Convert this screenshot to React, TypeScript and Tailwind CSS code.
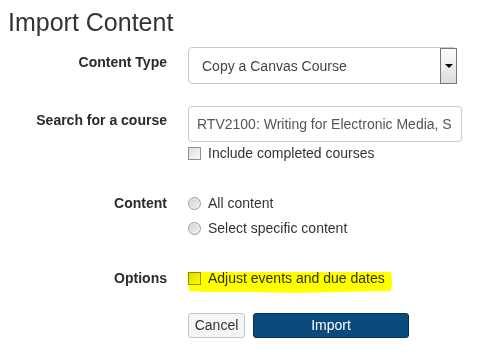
const font = "font-['Liberation_Sans',Arial,sans-serif]";

const Checkbox = () => (
  <span className="inline-block w-[13px] h-[13px] border border-[#8f8f8f] bg-gradient-to-br from-[#dcdcdc] to-[#fbfbfb] shrink-0" />
);

const Radio = () => (
  <span className="inline-block w-[13px] h-[13px] rounded-full border border-[#9a9a9a] bg-gradient-to-br from-[#cfcfcf] to-[#f4f4f4] shrink-0 shadow-[inset_0_0_0_1px_#eeeeee]" />
);

const Label = ({ children, pt }: { children: React.ReactNode; pt: string }) => (
  <div className={`w-[167px] shrink-0 text-right text-[14px] leading-[20px] font-bold text-[#2a2a2a] ${pt}`}>
    {children}
  </div>
);

export default function App() {
  return (
    <div className={`${font} w-[479px] h-[362px] bg-white text-[#333] pl-[8px] overflow-hidden`}>
      {/* Title */}
      <h1 className="pt-[7px] text-[25px] leading-[30px] text-[#333] font-normal">Import Content</h1>

      <div className="-ml-[8px] flex flex-col">
        {/* Content type */}
        <div className="flex mt-[10px]">
          <Label pt="pt-[5px]">Content Type</Label>
          <div className="ml-[21px] w-[269px] h-[37px] border border-[#c8c8c8] rounded-[4px] flex items-center">
            <span className="flex-1 pl-[13px] pt-[1px] text-[14px] text-[#444]">Copy a Canvas Course</span>
            <div className="w-[17px] h-[36px] border border-[#777] bg-gradient-to-b from-[#ffffff] to-[#dcdcdc] flex items-center justify-center mr-[-1px]">
              <span className="w-0 h-0 border-l-[4px] border-r-[4px] border-t-[4px] border-l-transparent border-r-transparent border-t-black" />
            </div>
          </div>
        </div>

        {/* Search */}
        <div className="flex mt-[22px]">
          <Label pt="pt-[4px]">Search for a course</Label>
          <div className="ml-[21px] flex flex-col">
            <div className="w-[274px] h-[36px] border border-[#c8c8c8] rounded-[4px] flex items-center pl-[8px] pr-[8px] overflow-hidden">
              <span className="whitespace-nowrap text-[14px] text-[#555]">
                RTV2100: Writing for Electronic Media, S
              </span>
            </div>
            <div className="mt-[1px] h-[20px] flex items-center gap-[7px]">
              <Checkbox />
              <span className="text-[14px] text-[#333]">Include completed courses</span>
            </div>
          </div>
        </div>

        {/* Content */}
        <div className="flex mt-[30px]">
          <Label pt="">Content</Label>
          <div className="ml-[21px] flex flex-col gap-[5px]">
            <div className="h-[20px] flex items-center gap-[7px]">
              <Radio />
              <span className="text-[14px] text-[#333]">All content</span>
            </div>
            <div className="h-[20px] flex items-center gap-[7px]">
              <Radio />
              <span className="text-[14px] text-[#333]">Select specific content</span>
            </div>
          </div>
        </div>

        {/* Options */}
        <div className="flex mt-[30px]">
          <Label pt="">Options</Label>
          <div className="ml-[21px] relative h-[20px] flex items-center gap-[7px]">
            <Checkbox />
            <span className="text-[14px] text-[#333]">Adjust events and due dates</span>
            <svg
              className="absolute left-[-1px] top-[3px] mix-blend-multiply pointer-events-none"
              width="206"
              height="23"
              viewBox="0 0 206 23"
            >
              <path
                d="M0 1 L204 1 L205 11 L204 20 L150 21 L110 22 L60 21 L20 21 L2 20 Z"
                fill="#ffff00"
              />
            </svg>
          </div>
        </div>

        {/* Buttons */}
        <div className="flex mt-[25px] ml-[188px] gap-[8px]">
          <button className="w-[57px] h-[25px] border border-[#c5c5c5] rounded-[3px] bg-[#f5f5f5] text-[14px] text-[#333]">
            Cancel
          </button>
          <button className="w-[156px] h-[25px] border border-[#07314f] rounded-[3px] bg-[#0b4a7c] text-[14px] text-white">
            Import
          </button>
        </div>
      </div>
    </div>
  );
}
